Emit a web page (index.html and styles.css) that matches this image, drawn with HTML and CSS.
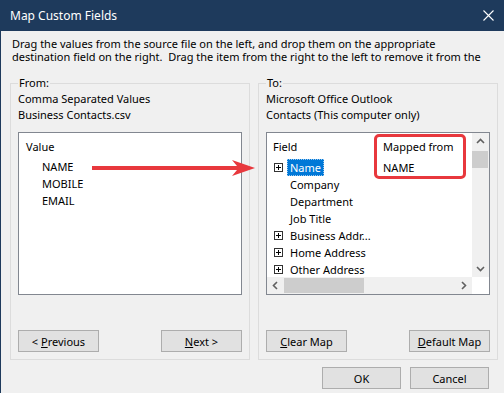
FILE: index.html
```html
<!DOCTYPE html>
<html lang="en">
<head>
  <meta charset="UTF-8">
  <title>Map Custom Fields</title>
  <link rel="stylesheet" href="styles.css">
</head>
<body>
  <div class="window">
    <div class="titlebar">
      <span class="title">Map Custom Fields</span>
      <svg class="close" width="11" height="11" viewBox="0 0 11 11">
        <path d="M0.5 0.5 L10.5 10.5 M10.5 0.5 L0.5 10.5" stroke="#fff" stroke-width="1.1" fill="none"/>
      </svg>
    </div>

    <div class="intro">
      <div>Drag the values from the source file on the left, and drop them on the appropriate</div>
      <div>destination field on the right.&nbsp; Drag the item from the right to the left to remove it from the</div>
    </div>

    <div class="groups">
      <fieldset class="group">
        <legend>From:</legend>
        <div class="source">Comma Separated Values</div>
        <div class="source">Business Contacts.csv</div>
        <div class="listbox">
          <div class="list-head">Value</div>
          <div class="list-item">NAME</div>
          <div class="list-item">MOBILE</div>
          <div class="list-item">EMAIL</div>
        </div>
        <div class="btn-row">
          <button class="btn">&lt; <u>P</u>revious</button>
          <button class="btn"><u>N</u>ext &gt;</button>
        </div>
      </fieldset>

      <fieldset class="group">
        <legend>To:</legend>
        <div class="source">Microsoft Office Outlook</div>
        <div class="source">Contacts (This computer only)</div>
        <div class="listbox tree">
          <div class="tree-body">
            <div class="tree-row tree-head">
              <span class="col-field">Field</span>
              <span class="col-map">Mapped from</span>
            </div>
            <div class="tree-row">
              <span class="col-field"><span class="plus"></span><span class="selected">Name</span></span>
              <span class="col-map">NAME</span>
            </div>
            <div class="tree-row"><span class="col-field"><span class="spacer"></span><span class="label">Company</span></span></div>
            <div class="tree-row"><span class="col-field"><span class="spacer"></span><span class="label">Department</span></span></div>
            <div class="tree-row"><span class="col-field"><span class="spacer"></span><span class="label">Job Title</span></span></div>
            <div class="tree-row"><span class="col-field"><span class="plus"></span><span class="label">Business Addr...</span></span></div>
            <div class="tree-row"><span class="col-field"><span class="plus"></span><span class="label">Home Address</span></span></div>
            <div class="tree-row"><span class="col-field"><span class="plus"></span><span class="label">Other Address</span></span></div>
          </div>
          <div class="vscroll">
            <svg width="17" height="17" viewBox="0 0 17 17"><path d="M5 10 L8.5 6.5 L12 10" stroke="#606060" stroke-width="1.6" fill="none"/></svg>
            <div class="vthumb"></div>
            <div class="vtrack"></div>
            <svg width="17" height="17" viewBox="0 0 17 17"><path d="M5 7 L8.5 10.5 L12 7" stroke="#606060" stroke-width="1.6" fill="none"/></svg>
          </div>
          <div class="hscroll">
            <svg width="17" height="17" viewBox="0 0 17 17"><path d="M10 5 L6.5 8.5 L10 12" stroke="#606060" stroke-width="1.6" fill="none"/></svg>
            <div class="hthumb"></div>
            <div class="htrack"></div>
            <svg width="17" height="17" viewBox="0 0 17 17"><path d="M7 5 L10.5 8.5 L7 12" stroke="#606060" stroke-width="1.6" fill="none"/></svg>
          </div>
          <div class="corner"></div>
        </div>
        <div class="btn-row">
          <button class="btn"><u>C</u>lear Map</button>
          <button class="btn"><u>D</u>efault Map</button>
        </div>
      </fieldset>
    </div>

    <div class="footer">
      <button class="btn btn-small">OK</button>
      <button class="btn btn-small">Cancel</button>
    </div>

    <!-- annotations drawn over the dialog -->
    <svg class="arrow" width="170" height="24" viewBox="0 0 170 24">
      <polygon points="3,10 148,10 143,4 166,12 143,20 148,14 3,14" fill="#e8383d"/>
    </svg>
    <div class="highlight-box"></div>
  </div>
</body>
</html>
```

FILE: styles.css
```css
body {
  margin: 0;
  font-family: "Noto Sans", "Liberation Sans", sans-serif;
  font-size: 11px;
  color: #000;
}
.window {
  position: relative;
  width: 504px;
  height: 393px;
  box-sizing: border-box;
  border-left: 1px solid #1e3a5c;
  background-color: #f0f0f0;
  overflow: hidden;
}
.titlebar {
  height: 31px;
  background-color: #1e3a5c;
  color: #fff;
  display: flex;
  align-items: center;
  justify-content: space-between;
  padding: 0 10px 0 9px;
  font-size: 12px;
}
.close {
  display: block;
}
.intro {
  padding: 6px 0 0 11px;
  line-height: 13px;
  white-space: nowrap;
}
.groups {
  display: flex;
  gap: 8px;
  margin: 12px 0 0 9px;
}
.group {
  box-sizing: border-box;
  width: 240px;
  height: 285px;
  margin: 0;
  padding: 0 7px 6px 7px;
  border: 1px solid #dcdcdc;
  min-width: 0;
}
.group legend {
  padding: 0 1px;
  line-height: 16px;
}
.source {
  line-height: 16px;
  white-space: nowrap;
}
.listbox {
  box-sizing: border-box;
  height: 163px;
  margin-top: 9px;
  background-color: #fff;
  border: 1px solid #828790;
  padding-top: 5px;
}
.list-head {
  line-height: 17px;
  padding-left: 7px;
  margin-bottom: 3px;
}
.list-item {
  line-height: 17px;
  padding-left: 23px;
}
.btn-row {
  display: flex;
  justify-content: space-between;
  margin-top: 35px;
}
.btn {
  box-sizing: border-box;
  width: 81px;
  height: 22px;
  padding: 0;
  background-color: #e1e1e1;
  border: 1px solid #adadad;
  font-family: inherit;
  font-size: 11px;
  color: #000;
}
.btn-small {
  width: 79px;
}
.footer {
  display: flex;
  justify-content: flex-end;
  gap: 9px;
  padding-right: 15px;
  margin-top: 7px;
}

/* tree list on the right */
.tree {
  display: grid;
  grid-template-columns: 1fr 17px;
  grid-template-rows: 1fr 17px;
  padding-top: 0;
}
.tree-body {
  padding-top: 5px;
  overflow: hidden;
}
.tree-row {
  display: flex;
  height: 17px;
  line-height: 17px;
  white-space: nowrap;
}
.tree-head {
  margin-bottom: 4px;
}
.col-field {
  display: flex;
  align-items: center;
  width: 116px;
  padding-left: 7px;
  box-sizing: border-box;
}
.tree-head .col-field {
  padding-left: 6px;
}
.plus,
.spacer {
  width: 9px;
  height: 9px;
  margin-right: 4px;
  box-sizing: border-box;
  flex: none;
}
.plus {
  position: relative;
  border: 1px solid #333;
}
.plus::before,
.plus::after {
  content: "";
  position: absolute;
  background-color: #000;
}
.plus::before {
  left: 1px;
  top: 3px;
  width: 5px;
  height: 1px;
}
.plus::after {
  left: 3px;
  top: 1px;
  width: 1px;
  height: 5px;
}
.label,
.selected {
  padding: 0 2px;
  border: 1px solid transparent;
  line-height: 15px;
}
.selected {
  background-color: #0078d7;
  color: #fff;
  border: 1px dotted #9cc8ee;
}
.vscroll {
  display: flex;
  flex-direction: column;
  background-color: #f0f0f0;
}
.vthumb {
  height: 17px;
  margin: 1px 1px 0 0;
  background-color: #cdcdcd;
}
.vtrack,
.htrack {
  flex: 1;
}
.hscroll {
  display: flex;
  background-color: #f0f0f0;
}
.hthumb {
  width: 80px;
  margin: 1px 0;
  background-color: #cdcdcd;
}
.corner {
  background-color: #fff;
}

/* red annotations */
.arrow {
  position: absolute;
  left: 88px;
  top: 156px;
}
.highlight-box {
  position: absolute;
  left: 373px;
  top: 134px;
  width: 92px;
  height: 45px;
  box-sizing: border-box;
  border: 3px solid #e8383d;
  border-radius: 5px;
}
```
